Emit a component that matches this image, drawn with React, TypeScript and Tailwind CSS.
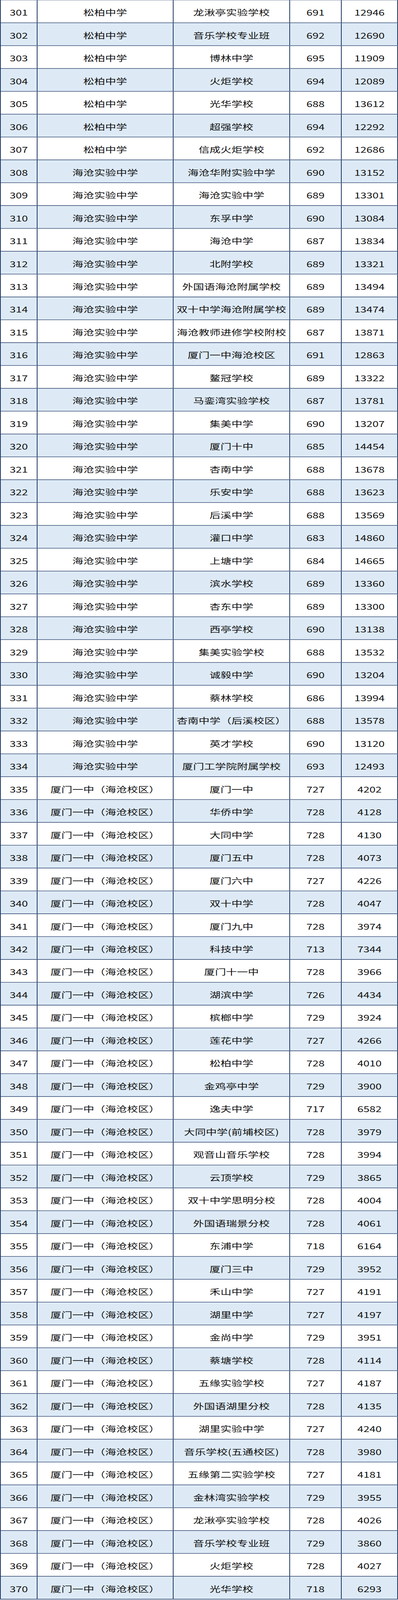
import React, { useState } from 'react';

type Row = [number, string, string, number, number];

const A = '松柏中学';
const B = '海沧实验中学';
const C = '厦门一中（海沧校区）';

const rows: Row[] = [
  [301, A, '龙湫亭实验学校', 691, 12946],
  [302, A, '音乐学校专业班', 692, 12690],
  [303, A, '博林中学', 695, 11909],
  [304, A, '火炬学校', 694, 12089],
  [305, A, '光华学校', 688, 13612],
  [306, A, '超强学校', 694, 12292],
  [307, A, '信成火炬学校', 692, 12686],
  [308, B, '海沧华附实验中学', 690, 13152],
  [309, B, '海沧实验中学', 689, 13301],
  [310, B, '东孚中学', 690, 13084],
  [311, B, '海沧中学', 687, 13834],
  [312, B, '北附学校', 689, 13321],
  [313, B, '外国语海沧附属学校', 689, 13494],
  [314, B, '双十中学海沧附属学校', 689, 13474],
  [315, B, '海沧教师进修学校附校', 687, 13871],
  [316, B, '厦门一中海沧校区', 691, 12863],
  [317, B, '鳌冠学校', 689, 13322],
  [318, B, '马銮湾实验学校', 687, 13781],
  [319, B, '集美中学', 690, 13207],
  [320, B, '厦门十中', 685, 14454],
  [321, B, '杏南中学', 688, 13678],
  [322, B, '乐安中学', 688, 13623],
  [323, B, '后溪中学', 688, 13569],
  [324, B, '灌口中学', 683, 14860],
  [325, B, '上塘中学', 684, 14665],
  [326, B, '滨水学校', 689, 13360],
  [327, B, '杏东中学', 689, 13300],
  [328, B, '西亭学校', 690, 13138],
  [329, B, '集美实验学校', 688, 13532],
  [330, B, '诚毅中学', 690, 13204],
  [331, B, '蔡林学校', 686, 13994],
  [332, B, '杏南中学（后溪校区）', 688, 13578],
  [333, B, '英才学校', 690, 13120],
  [334, B, '厦门工学院附属学校', 693, 12493],
  [335, C, '厦门一中', 727, 4202],
  [336, C, '华侨中学', 728, 4128],
  [337, C, '大同中学', 728, 4130],
  [338, C, '厦门五中', 728, 4073],
  [339, C, '厦门六中', 727, 4226],
  [340, C, '双十中学', 728, 4047],
  [341, C, '厦门九中', 728, 3974],
  [342, C, '科技中学', 713, 7344],
  [343, C, '厦门十一中', 728, 3966],
  [344, C, '湖滨中学', 726, 4434],
  [345, C, '槟榔中学', 729, 3924],
  [346, C, '莲花中学', 727, 4266],
  [347, C, '松柏中学', 728, 4010],
  [348, C, '金鸡亭中学', 729, 3900],
  [349, C, '逸夫中学', 717, 6582],
  [350, C, '大同中学(前埔校区)', 728, 3979],
  [351, C, '观音山音乐学校', 728, 3994],
  [352, C, '云顶学校', 729, 3865],
  [353, C, '双十中学思明分校', 728, 4004],
  [354, C, '外国语瑞景分校', 728, 4061],
  [355, C, '东浦中学', 718, 6164],
  [356, C, '厦门三中', 729, 3952],
  [357, C, '禾山中学', 727, 4191],
  [358, C, '湖里中学', 727, 4197],
  [359, C, '金尚中学', 729, 3951],
  [360, C, '蔡塘学校', 728, 4114],
  [361, C, '五缘实验学校', 727, 4187],
  [362, C, '外国语湖里分校', 728, 4135],
  [363, C, '湖里实验中学', 727, 4240],
  [364, C, '音乐学校(五通校区)', 728, 3980],
  [365, C, '五缘第二实验学校', 727, 4181],
  [366, C, '金林湾实验学校', 729, 3955],
  [367, C, '龙湫亭实验学校', 728, 4026],
  [368, C, '音乐学校专业班', 729, 3860],
  [369, C, '火炬学校', 728, 4027],
  [370, C, '光华学校', 718, 6293],
];

// full height of the table as drawn (70 rows of 80px + top rule)
const TABLE_H = 5603;

const cell =
  'flex items-center justify-center border-r-2 border-[#1f3864] whitespace-nowrap pt-[6px] overflow-hidden';

export default function App() {
  // the window may be shorter than the table; squeeze it vertically to fit
  const [frameH] = useState(() =>
    typeof window === 'undefined' ? TABLE_H : Math.min(window.innerHeight || TABLE_H, TABLE_H)
  );
  const k = frameH / TABLE_H;

  return (
    <div className="w-full overflow-hidden bg-white" style={{ height: frameH }}>
      <div
        className="w-full text-[28px] leading-none text-[#111]"
        style={{
          fontFamily: '"Noto Sans CJK SC", "Noto Sans", sans-serif',
          transform: `scaleY(${k})`,
          transformOrigin: 'top left',
        }}
      >
        <div className="border-t border-l-2 border-[#1f3864]">
          {rows.map(([id, from, to, score, rank], i) => (
            <div
              key={id}
              className={`grid h-[80px] grid-cols-[94px_348px_298px_132px_1fr] border-b-2 border-[#1f3864] ${
                i % 2 === 1 ? 'bg-[#ddeaf6]' : 'bg-white'
              }`}
            >
              <div className={cell}>{id}</div>
              <div className={cell}>{from}</div>
              <div className={cell}>{to}</div>
              <div className={cell}>{score}</div>
              <div className={cell}>{rank}</div>
            </div>
          ))}
        </div>
      </div>
    </div>
  );
}
